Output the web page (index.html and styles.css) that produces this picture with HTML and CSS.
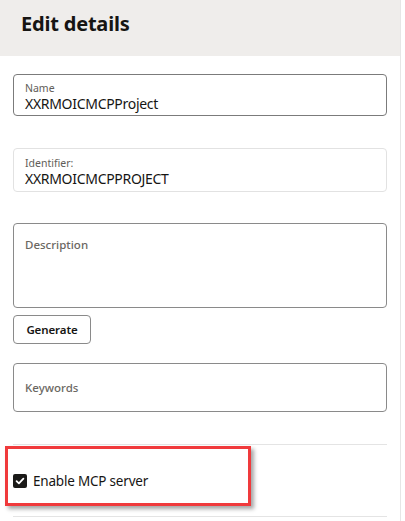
FILE: index.html
```html
<!DOCTYPE html>
<html>
<head>
<meta charset="utf-8">
<link rel="stylesheet" href="styles.css">
</head>
<body>
<div class="panel">
  <header class="head"><h1>Edit details</h1></header>
  <div class="form">
    <div class="field name">
      <span class="lbl">Name</span>
      <span class="val">XXRMOICMCPProject</span>
    </div>
    <div class="field ident">
      <span class="lbl">Identifier:</span>
      <span class="val">XXRMOICMCPPROJECT</span>
    </div>
    <div class="field desc"><span class="ph">Description</span></div>
    <button class="btn">Generate</button>
    <div class="field kw"><span class="ph">Keywords</span></div>
    <div class="mcp">
      <span class="check"><svg width="14" height="14" viewBox="0 0 14 14"><path d="M3.6 7.2 L5.9 9.4 L10.4 4.6" fill="none" stroke="#fff" stroke-width="1.8" stroke-linecap="round" stroke-linejoin="round"/></svg></span>
      <span class="mcp-text">Enable MCP server</span>
      <span class="highlight"></span>
    </div>
  </div>
</div>
</body>
</html>
```
FILE: styles.css
```css
* { box-sizing: border-box; }
body {
  margin: 0;
  background: #fff;
  font-family: "Noto Sans", "Open Sans", sans-serif;
  color: #161513;
}
.panel {
  width: 401px;
  height: 521px;
  border-right: 1px solid #e6e6e6;
  display: flex;
  flex-direction: column;
}
.head {
  height: 56px;
  background: #efedeb;
  padding: 12px 0 0 21px;
}
.head h1 {
  margin: 0;
  font-size: 20px;
  font-weight: 700;
  line-height: 24px;
  letter-spacing: -0.2px;
}
.form {
  padding: 18px 13px 0 13px;
  display: flex;
  flex-direction: column;
}
.field {
  border: 1px solid #7b7b7b;
  border-radius: 4px;
  padding: 6px 11px 0 11px;
  display: flex;
  flex-direction: column;
}
.name { height: 42px; }
.ident { height: 44px; margin-top: 32px; border-color: #e2e2e2; padding-top: 7px; }
.lbl {
  font-size: 10.5px;
  line-height: 14px;
  color: #615d58;
}
.val {
  font-size: 14px;
  line-height: 18px;
  letter-spacing: -0.3px;
  color: #161513;
}
.desc {
  height: 85px;
  margin-top: 31px;
  border-color: #8a8a8a;
  padding-top: 12px;
}
.ph {
  font-size: 11.5px;
  font-weight: 500;
  color: #6b6762;
  line-height: 18px;
}
.btn {
  align-self: flex-start;
  margin-top: 7px;
  width: 78px;
  height: 29px;
  border: 1px solid #8a8a8a;
  border-radius: 4px;
  background: #fff;
  font-family: inherit;
  font-size: 11.5px;
  font-weight: 600;
  letter-spacing: -0.1px;
  color: #161513;
  padding: 0;
}
.kw {
  height: 49px;
  margin-top: 19px;
  border-color: #8a8a8a;
  padding-top: 0;
  justify-content: center;
}
.mcp {
  position: relative;
  margin-top: 32px;
  height: 73px;
  border-top: 1px solid #e4e4e4;
  border-bottom: 1px solid #e4e4e4;
  display: flex;
  align-items: center;
  gap: 6px;
  padding-top: 0;
}
.check {
  width: 14px;
  height: 14px;
  background: #1b1a18;
  border-radius: 2px;
  display: flex;
}
.mcp-text {
  font-size: 13.5px;
  letter-spacing: -0.2px;
  color: #161513;
}
.highlight {
  position: absolute;
  left: -8px;
  top: 1px;
  width: 246px;
  height: 60px;
  border: 3px solid #f03a3c;
  box-shadow: 3px 3px 4px rgba(0,0,0,0.35);
}
```
